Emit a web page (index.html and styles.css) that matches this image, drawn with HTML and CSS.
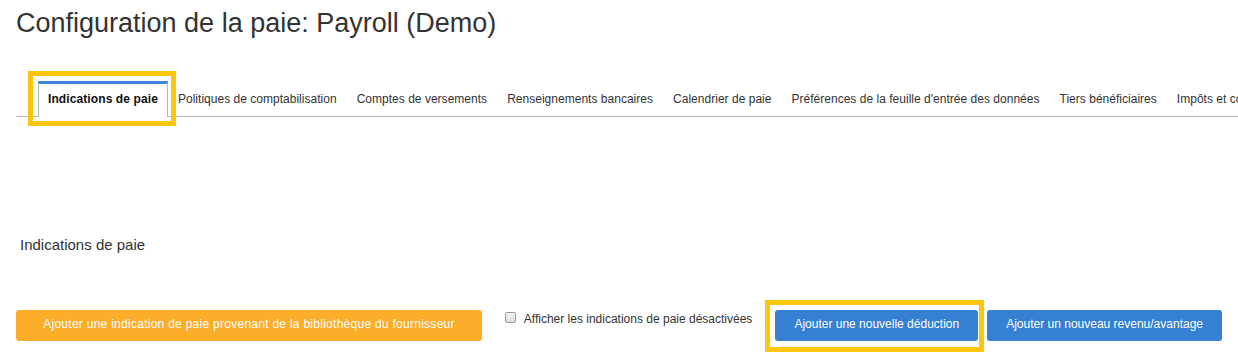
FILE: index.html
```html
<!DOCTYPE html>
<html lang="fr">
<head>
    <meta charset="UTF-8">
    <meta name="viewport" content="width=device-width, initial-scale=1.0">
    <title>Configuration de la paie</title>
    <link rel="stylesheet" href="styles.css">
</head>
<body>
    <div class="page">
        <h1 class="title">Configuration de la paie: Payroll (Demo)</h1>

        <div class="tabs">
            <div class="tab active">
                Indications de paie
                <span class="mark mark-tab"></span>
            </div>
            <div class="tab">Politiques de comptabilisation</div>
            <div class="tab">Comptes de versements</div>
            <div class="tab">Renseignements bancaires</div>
            <div class="tab">Calendrier de paie</div>
            <div class="tab">Préférences de la feuille d'entrée des données</div>
            <div class="tab">Tiers bénéficiaires</div>
            <div class="tab">Impôts et co</div>
        </div>

        <h2 class="section-title">Indications de paie</h2>

        <div class="actions">
            <button class="btn btn-orange">Ajouter une indication de paie provenant de la bibliothèque du fournisseur</button>
            <div class="actions-right">
                <label class="toggle">
                    <input type="checkbox">
                    <span>Afficher les indications de paie désactivées</span>
                </label>
                <span class="marked">
                    <button class="btn btn-blue">Ajouter une nouvelle déduction</button>
                    <span class="mark mark-btn"></span>
                </span>
                <button class="btn btn-blue">Ajouter un nouveau revenu/avantage</button>
            </div>
        </div>
    </div>
</body>
</html>
```

FILE: styles.css
```css
*{
    margin: 0;
    padding: 0;
    box-sizing: border-box;
}

body{
    width: 1238px;
    height: 362px;
    overflow: hidden;
    background: #fff;
    font-family: "Liberation Sans", Arial, sans-serif;
    color: #333;
}

.page{
    padding: 8px 16px 0;
}

.title{
    font-size: 27px;
    line-height: 30px;
    font-weight: normal;
    color: #333;
}

/* onglets */
.tabs{
    display: flex;
    white-space: nowrap;
    margin-top: 43px;
    padding-left: 22px;
    border-bottom: 1px solid #b5b5b5;
    margin-right: -16px;
}

.tab{
    position: relative;
    flex-shrink: 0;
    padding: 8px 9px 11px;
    font-size: 12px;
    line-height: 14px;
    letter-spacing: 0.02px;
    color: #333;
    border: 1px solid transparent;
    border-top: 3px solid transparent;
    border-bottom: none;
    margin-bottom: -1px;
}

.tab.active{
    font-weight: bold;
    letter-spacing: 0.1px;
    color: #111;
    background: #fff;
    border-color: #b5b5b5;
    border-top-color: #3b86dc;
}

/* cadres jaunes */
.mark{
    position: absolute;
    border: 5px solid #fcc60d;
    pointer-events: none;
}

.mark-tab{
    left: -11px;
    right: -9px;
    top: -13px;
    bottom: -9px;
}

.marked{
    position: relative;
    display: inline-flex;
}

.mark-btn{
    left: -10px;
    right: -6px;
    top: -10px;
    bottom: -11px;
}

.section-title{
    margin-top: 119px;
    padding-left: 4px;
    font-size: 15px;
    line-height: 18px;
    font-weight: normal;
    color: #333;
}

/* boutons */
.actions{
    display: flex;
    align-items: flex-start;
    margin-top: 56px;
}

.actions-right{
    display: flex;
    align-items: flex-start;
    margin-left: auto;
}

.btn{
    height: 31px;
    padding: 0 19px 2px;
    border: none;
    border-radius: 3px;
    font-family: inherit;
    font-size: 12px;
    line-height: 29px;
    color: #fff;
    white-space: nowrap;
}

.btn-orange{
    width: 466px;
    padding: 0 0 2px;
    letter-spacing: 0.27px;
    background: #fcad2a;
}

.btn-blue{
    background: #3580d3;
    margin-left: 9px;
}

.marked .btn-blue{
    margin-left: 0;
}

.toggle{
    display: flex;
    align-items: flex-start;
    gap: 8px;
    margin-top: 2px;
    margin-right: 23px;
    font-size: 12px;
    line-height: 14px;
    color: #333;
}

.toggle input{
    appearance: none;
    width: 11px;
    height: 11px;
    margin-top: 0;
    border: 1px solid #9a9a9a;
    border-radius: 2px;
    background: linear-gradient(#f4f4f4, #dedede);
}
```
